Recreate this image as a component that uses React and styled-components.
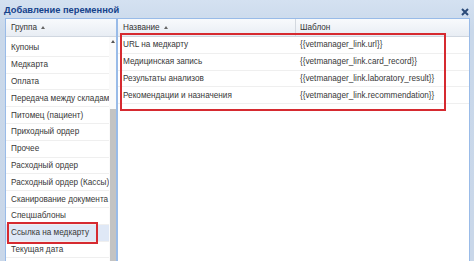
import React from 'react';
import styled, { createGlobalStyle } from 'styled-components';

const Global = createGlobalStyle`
  html, body {
    margin: 0;
    padding: 0;
    background: #cbd9ea;
  }
  #root {
    width: 474px;
    height: 261px;
    overflow: hidden;
  }
`;

const Window = styled.div`
  width: 474px;
  height: 261px;
  display: flex;
  flex-direction: column;
  background: linear-gradient(#d4e1f1, #c9d8ea 30px, #c9d7e9);
  font-family: "Liberation Sans", Arial, sans-serif;
  font-size: 8.2px;
  color: #383838;
  overflow: hidden;
`;

const TitleBar = styled.div`
  height: 18px;
  flex: none;
  display: flex;
  align-items: center;
  justify-content: space-between;
  padding: 1px 4px 0 4px;
  box-sizing: border-box;
`;

const Title = styled.div`
  font-weight: bold;
  font-size: 9.3px;
  color: #15428b;
`;

const Close = styled.div`
  width: 10px;
  height: 10px;
  margin-top: 5px;
  display: flex;
  align-items: center;
  justify-content: center;
`;

const Body = styled.div`
  flex: 1;
  display: flex;
  padding: 0 4px 0 5px;
  min-height: 0;
`;

const Panel = styled.div`
  position: relative;
  background: #fff;
  border: 1px solid #99bbe8;
  border-bottom: none;
  display: flex;
  flex-direction: column;
  width: ${p => (p.$width ? `${p.$width}px` : 'auto')};
  flex: ${p => (p.$width ? 'none' : '1')};
  box-sizing: border-box;
  overflow: hidden;
`;

const Header = styled.div`
  height: 17px;
  flex: none;
  display: flex;
  background: linear-gradient(#f8fafc, #e8edf4);
  border-bottom: 1px solid #d0d7e0;
`;

const HeaderCell = styled.div`
  display: flex;
  align-items: center;
  padding-left: ${p => p.$pad || 5}px;
  width: ${p => (p.$width ? `${p.$width}px` : 'auto')};
  flex: ${p => (p.$width ? 'none' : '1')};
  border-right: ${p => (p.$sep ? '1px solid #d3d8df' : 'none')};
  box-sizing: border-box;
  color: #333;
`;

const SortArrow = styled.span`
  display: inline-block;
  margin-left: 4px;
  width: 0;
  height: 0;
  border-left: 2.5px solid transparent;
  border-right: 2.5px solid transparent;
  border-bottom: 3px solid #666;
`;

const ListArea = styled.div`
  flex: 1;
  display: flex;
  min-height: 0;
`;

const List = styled.div`
  flex: 1;
  min-width: 0;
  padding-top: ${p => p.$offset || 0}px;
  overflow: hidden;
`;

const Row = styled.div`
  height: 16.8px;
  display: flex;
  align-items: center;
  box-sizing: border-box;
  border-bottom: 1px solid #efefef;
  background: ${p => (p.$selected ? '#dfe8f6' : 'transparent')};
  white-space: nowrap;
`;

const Cell = styled.div`
  padding-left: ${p => p.$pad || 5}px;
  width: ${p => (p.$width ? `${p.$width}px` : 'auto')};
  flex: ${p => (p.$width ? 'none' : '1')};
  box-sizing: border-box;
  overflow: hidden;
  white-space: nowrap;
`;

const Scrollbar = styled.div`
  width: 7px;
  flex: none;
  display: flex;
  flex-direction: column;
  align-items: center;
  background: #fafafa;
`;

const ScrollArrow = styled.div`
  margin-top: 3px;
  width: 0;
  height: 0;
  border-left: 2px solid transparent;
  border-right: 2px solid transparent;
  border-bottom: 3px solid #555;
`;

const Thumb = styled.div`
  margin-top: 66px;
  width: 6px;
  flex: 1;
  background: #c3c3c3;
`;

const Mark = styled.div`
  position: absolute;
  left: ${p => p.$x}px;
  top: ${p => p.$y}px;
  width: ${p => p.$w}px;
  height: ${p => p.$h}px;
  border: 2px solid #d62a30;
  box-sizing: border-box;
  pointer-events: none;
`;

const groups = [
  'Купоны',
  'Медкарта',
  'Оплата',
  'Передача между складами',
  'Питомец (пациент)',
  'Приходный ордер',
  'Прочее',
  'Расходный ордер',
  'Расходный ордер (Кассы)',
  'Сканирование документа',
  'Спецшаблоны',
  'Ссылка на медкарту',
  'Текущая дата',
];

const variables = [
  ['URL на медкарту', '{{vetmanager_link.url}}'],
  ['Медицинская запись', '{{vetmanager_link.card_record}}'],
  ['Результаты анализов', '{{vetmanager_link.laboratory_result}}'],
  ['Рекомендации и назначения', '{{vetmanager_link.recommendation}}'],
];

const App = () => {
  return (
    <>
      <Global />
      <Window>
        <TitleBar>
          <Title>Добавление переменной</Title>
          <Close>
            <svg width="8" height="8" viewBox="0 0 8 8">
              <path d="M1 1 L7 7 M7 1 L1 7" stroke="#2b4a78" strokeWidth="2" />
            </svg>
          </Close>
        </TitleBar>
        <Body>
          <Panel $width={112}>
            <Header>
              <HeaderCell $pad={5}>
                Группа<SortArrow />
              </HeaderCell>
            </Header>
            <ListArea>
              <List $offset={3}>
                {groups.map(g => (
                  <Row key={g} $selected={g === 'Ссылка на медкарту'}>
                    <Cell $pad={5}>{g}</Cell>
                  </Row>
                ))}
              </List>
              <Scrollbar>
                <ScrollArrow />
                <Thumb />
              </Scrollbar>
            </ListArea>
            <Mark $x={1} $y={203} $w={91} $h={22} />
          </Panel>
          <Panel>
            <Header>
              <HeaderCell $width={178} $sep>
                Название<SortArrow />
              </HeaderCell>
              <HeaderCell $pad={4}>Шаблон</HeaderCell>
            </Header>
            <List>
              {variables.map(([name, tpl]) => (
                <Row key={tpl}>
                  <Cell $width={178}>{name}</Cell>
                  <Cell $pad={4}>{tpl}</Cell>
                </Row>
              ))}
            </List>
            <Mark $x={2} $y={14} $w={326} $h={78} />
          </Panel>
        </Body>
      </Window>
    </>
  );
};

export default App;
